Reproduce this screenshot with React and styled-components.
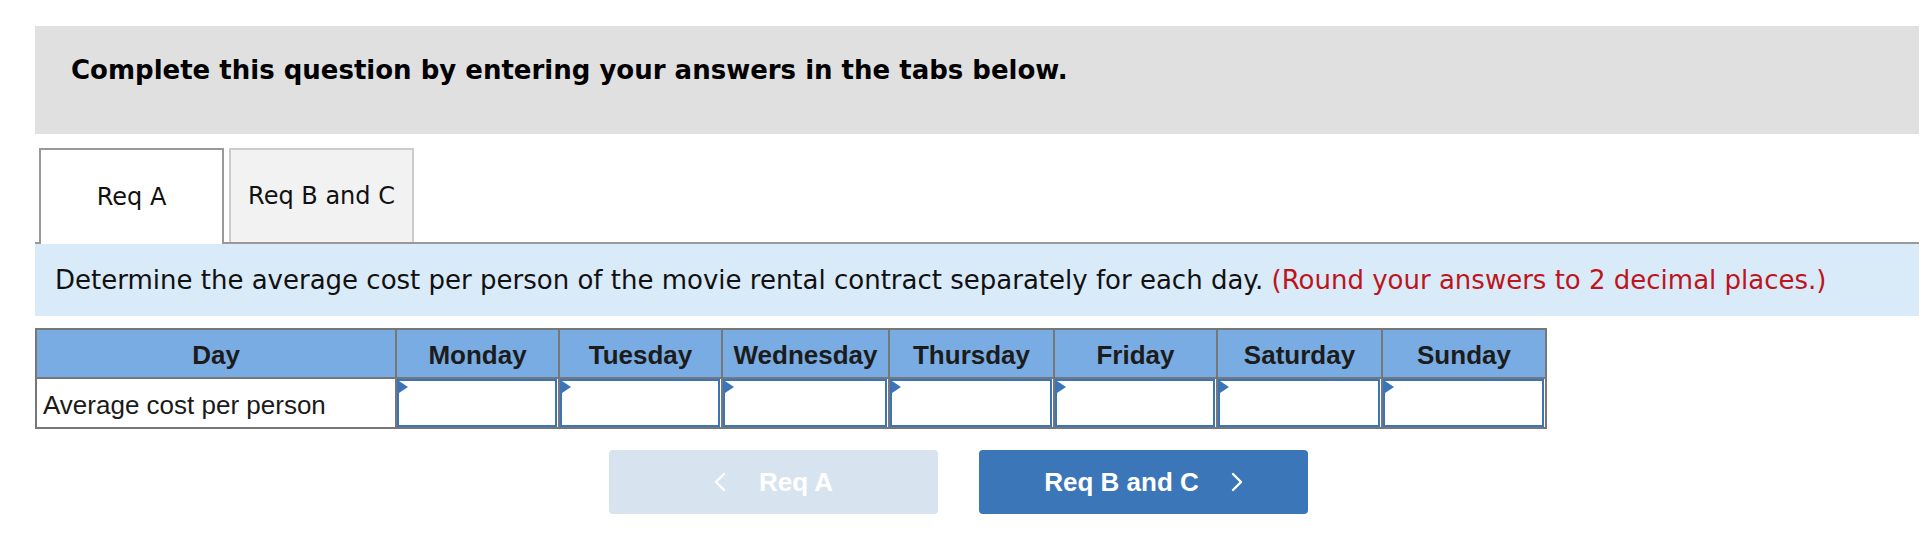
import React from "react";
import styled, { createGlobalStyle } from "styled-components";

const GlobalStyle = createGlobalStyle`
  html, body { margin: 0; padding: 0; background: #ffffff; }
  body { font-family: "DejaVu Sans", Verdana, sans-serif; color: #000; }
  * { box-sizing: border-box; }
`;

const Page = styled.div`
  padding: 26px 9px 40px 35px;
`;

const Banner = styled.div`
  background: #e0e0e0;
  height: 108px;
  padding: 28px 36px 0;
  font-family: "DejaVu Sans", Verdana, sans-serif;
  font-weight: bold;
  font-size: 26px;
  line-height: 32px;
  color: #000;
`;

const TabList = styled.div`
  display: flex;
  align-items: flex-end;
  gap: 5px;
  margin-top: 14px;
  padding-left: 4px;
  border-bottom: 2px solid #999999;
`;

const Tab = styled.div`
  width: 185px;
  height: ${(p) => (p.$active ? "96px" : "94px")};
  margin-bottom: ${(p) => (p.$active ? "-2px" : "0")};
  border: 2px solid ${(p) => (p.$active ? "#999999" : "#cccccc")};
  border-bottom: none;
  background: ${(p) => (p.$active ? "#ffffff" : "#f2f2f2")};
  display: flex;
  align-items: center;
  justify-content: center;
  font-size: 24px;
  color: #111;
  position: relative;
  z-index: 1;
`;

const Instruction = styled.div`
  background: #d9eaf8;
  height: 72px;
  display: flex;
  align-items: center;
  padding-left: 20px;
  font-size: 26px;
  color: #111;
  white-space: nowrap;
`;

const Hint = styled.span`
  color: #bd151d;
`;

const Table = styled.table`
  margin-top: 12px;
  border-collapse: collapse;
  table-layout: fixed;
  width: 1510px;
  font-family: "Liberation Sans", Arial, sans-serif;
  font-size: 26px;
  border: 2px solid #777777;
`;

const HeadCell = styled.th`
  height: 49px;
  padding: 4px 0 0;
  background: #79ace2;
  border: 2px solid #777777;
  color: #1c1c1c;
  font-weight: bold;
  text-align: center;
  vertical-align: middle;
`;

const LabelCell = styled.td`
  height: 49px;
  padding: 4px 0 0 6px;
  border: 2px solid #777777;
  color: #1a1a1a;
  text-align: left;
  vertical-align: middle;
  white-space: nowrap;
`;

const InputCell = styled.td`
  padding: 0 1px 0 0;
  border: 2px solid #777777;
  vertical-align: top;
`;

const FieldWrap = styled.div`
  position: relative;
  &::before {
    content: "";
    position: absolute;
    top: 2px;
    left: 2px;
    width: 0;
    height: 0;
    border-top: 6.5px solid transparent;
    border-bottom: 6.5px solid transparent;
    border-left: 9px solid #3a75b9;
    pointer-events: none;
  }
`;

const Field = styled.input`
  display: block;
  width: 100%;
  height: 48px;
  margin: 0;
  border: 2px solid #3a75b9;
  background: #ffffff;
  font-family: "Liberation Sans", Arial, sans-serif;
  font-size: 24px;
  padding: 0 8px;
  text-align: right;
  outline: none;
`;

const ButtonRow = styled.div`
  display: flex;
  gap: 41px;
  margin-top: 21px;
  padding-left: 574px;
`;

const NavButton = styled.button`
  width: 329px;
  height: 64px;
  border: none;
  border-radius: 4px;
  background: ${(p) => (p.$disabled ? "#d8e3f0" : "#3b76b8")};
  color: #ffffff;
  font-family: "Liberation Sans", Arial, sans-serif;
  font-weight: bold;
  font-size: 26px;
  display: flex;
  align-items: center;
  justify-content: center;
  gap: ${(p) => (p.$disabled ? "33px" : "32px")};
  padding: 0;
  cursor: ${(p) => (p.$disabled ? "default" : "pointer")};
`;

const Chevron = ({ dir }) => (
  <svg width="12" height="20" viewBox="0 0 12 20" aria-hidden="true">
    <polyline
      points={dir === "left" ? "10,2 2,10 10,18" : "2,2 10,10 2,18"}
      fill="none"
      stroke="#ffffff"
      strokeWidth="2.4"
      strokeLinecap="round"
      strokeLinejoin="round"
    />
  </svg>
);

const days = [
  { name: "Monday", w: 163 },
  { name: "Tuesday", w: 163 },
  { name: "Wednesday", w: 167 },
  { name: "Thursday", w: 165 },
  { name: "Friday", w: 163 },
  { name: "Saturday", w: 165 },
  { name: "Sunday", w: 164 },
];

export default function App() {
  return (
    <>
      <GlobalStyle />
      <Page>
        <Banner>Complete this question by entering your answers in the tabs below.</Banner>
        <TabList>
          <Tab $active>Req A</Tab>
          <Tab>Req B and C</Tab>
        </TabList>
        <Instruction>
          Determine the average cost per person of the movie rental contract separately for each day.&nbsp;
          <Hint>(Round your answers to 2 decimal places.)</Hint>
        </Instruction>
        <Table>
          <colgroup>
            <col style={{ width: 360 }} />
            {days.map((d) => (
              <col key={d.name} style={{ width: d.w }} />
            ))}
          </colgroup>
          <thead>
            <tr>
              <HeadCell>Day</HeadCell>
              {days.map((d) => (
                <HeadCell key={d.name}>{d.name}</HeadCell>
              ))}
            </tr>
          </thead>
          <tbody>
            <tr>
              <LabelCell>Average cost per person</LabelCell>
              {days.map((d) => (
                <InputCell key={d.name}>
                  <FieldWrap>
                    <Field type="text" aria-label={`${d.name} average cost per person`} />
                  </FieldWrap>
                </InputCell>
              ))}
            </tr>
          </tbody>
        </Table>
        <ButtonRow>
          <NavButton $disabled>
            <Chevron dir="left" />
            <span>Req A</span>
          </NavButton>
          <NavButton>
            <span>Req B and C</span>
            <Chevron dir="right" />
          </NavButton>
        </ButtonRow>
      </Page>
    </>
  );
}
